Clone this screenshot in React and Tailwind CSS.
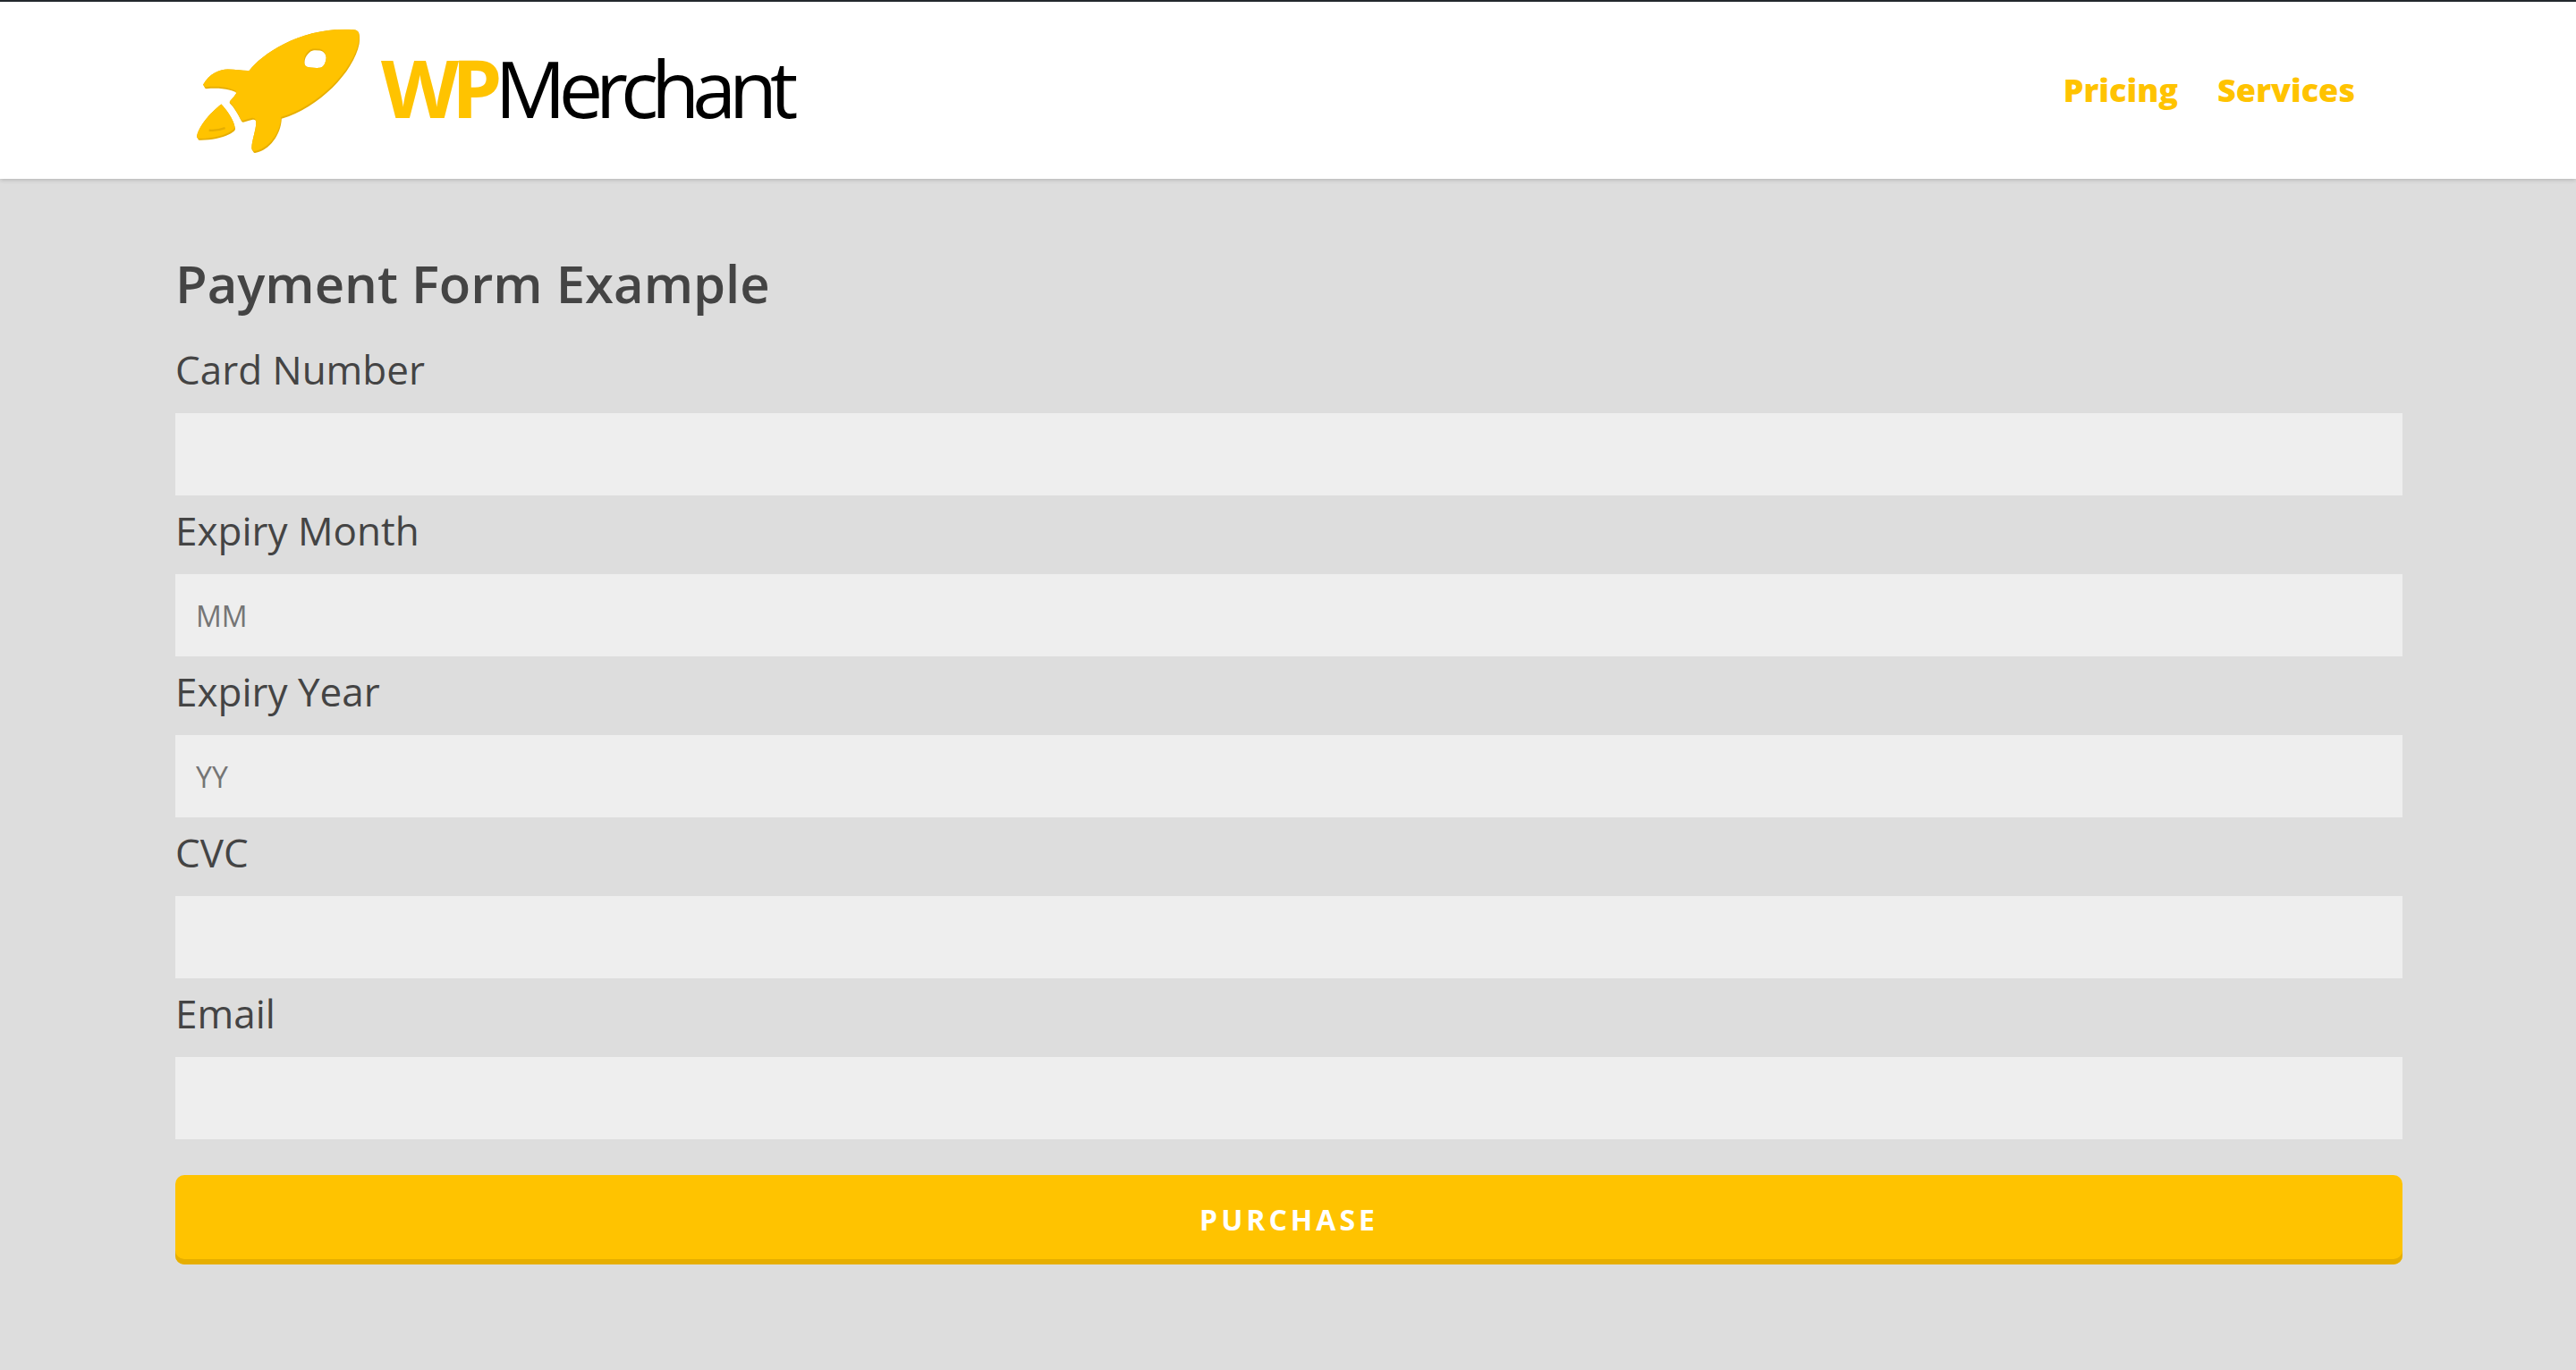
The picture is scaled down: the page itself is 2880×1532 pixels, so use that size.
const FIELDS = [
  { id: 'card-number', label: 'Card Number' },
  { id: 'expiry-month', label: 'Expiry Month', placeholder: 'MM' },
  { id: 'expiry-year', label: 'Expiry Year', placeholder: 'YY' },
  { id: 'cvc', label: 'CVC' },
  { id: 'email', label: 'Email', type: 'email' },
];

const ROCKET =
  'M236 236C280 180 400 97 560 97C592 97 600 100 604 108C608 118 608 130 606 146C588 240 470 362 345 398C343 450 305 505 256 513Q252 514 250 509L245 502C241 480 262 430 259 406Q258 400 248 401C236 403 226 408 216 410Q211 410 209 404C199 384 186 360 171 346Q169 341 173 337C181 329 188 320 194 311C172 298 140 294 92 297Q87 297 86 292L81 284C102 246 136 232 164 232C190 232 215 237 236 236ZM459 168C446 168 440 173 434 180C427 188 422 197 422 210C422 220 428 224 442 226C456 228 470 228 477 226C488 222 494 208 495 192C494 180 484 170 473 169Z';
const FLAME =
  'M142 349C160 368 184 400 189 430Q190 436 185 440C160 460 115 471 68 470Q64 470 64 466L60 460C62 430 102 380 142 349Z';

function Rocket() {
  return (
    <svg viewBox="58 92 554 424" className="h-[141px] w-[185px] shrink-0" aria-hidden="true">
      <defs>
        <clipPath id="rocket-outline">
          <path d={ROCKET} clipRule="evenodd" />
          <path d={FLAME} />
        </clipPath>
      </defs>
      <g clipPath="url(#rocket-outline)">
        <rect x="50" y="90" width="570" height="440" fill="#e6ae00" />
        <g transform="translate(-2 -6)" fill="#ffc300" stroke="#ffc300" strokeWidth="1">
          <path d={ROCKET} fillRule="evenodd" />
          <path d={FLAME} />
        </g>
        <path d="M101 437Q130 439 155 429" fill="none" stroke="#e6ae00" strokeWidth="7" />
      </g>
    </svg>
  );
}

function Field({ id, label, type = 'text', placeholder }) {
  return (
    <div>
      <label htmlFor={id} className="mb-2.5 block text-[44px] leading-[78px]">
        {label}
      </label>
      <input
        id={id}
        type={type}
        placeholder={placeholder}
        className="block h-[92px] w-full bg-[#eeeeee] px-[23px] text-[32px] outline-none placeholder:text-[#757575]"
      />
    </div>
  );
}

export default function App() {
  return (
    <div className="min-h-screen bg-[#dddddd] font-['Open_Sans',sans-serif] text-[#444444]">
      <header className="relative flex h-50 items-center justify-between border-t-2 border-[#23282d] bg-white pr-[247px] pl-[219px] shadow-[0_1px_5px_rgba(0,0,0,0.2)]">
        <a href="#home" className="flex items-center gap-[22px]">
          <Rocket />
          <span className="pb-2 text-[88px] leading-none tracking-[-8px] text-black">
            <b className="text-[90px] font-bold text-[#ffc300]">WP</b>Merchant
          </span>
        </a>
        <nav className="flex gap-11 text-4xl font-extrabold text-[#ffc300]">
          <a href="#pricing">Pricing</a>
          <a href="#services">Services</a>
        </nav>
      </header>
      <main className="pt-19 pr-[194px] pl-49">
        <h1 className="mb-4 text-[58px] leading-[82px] font-semibold">Payment Form Example</h1>
        <form>
          {FIELDS.map((field) => (
            <Field key={field.id} {...field} />
          ))}
          <button
            type="button"
            className="mt-10 h-25 w-full rounded-[10px] bg-[#ffc300] text-[32px] font-bold tracking-[4px] text-white shadow-[inset_0_-6px_0_#e6ae00]"
          >
            PURCHASE
          </button>
        </form>
      </main>
    </div>
  );
}
